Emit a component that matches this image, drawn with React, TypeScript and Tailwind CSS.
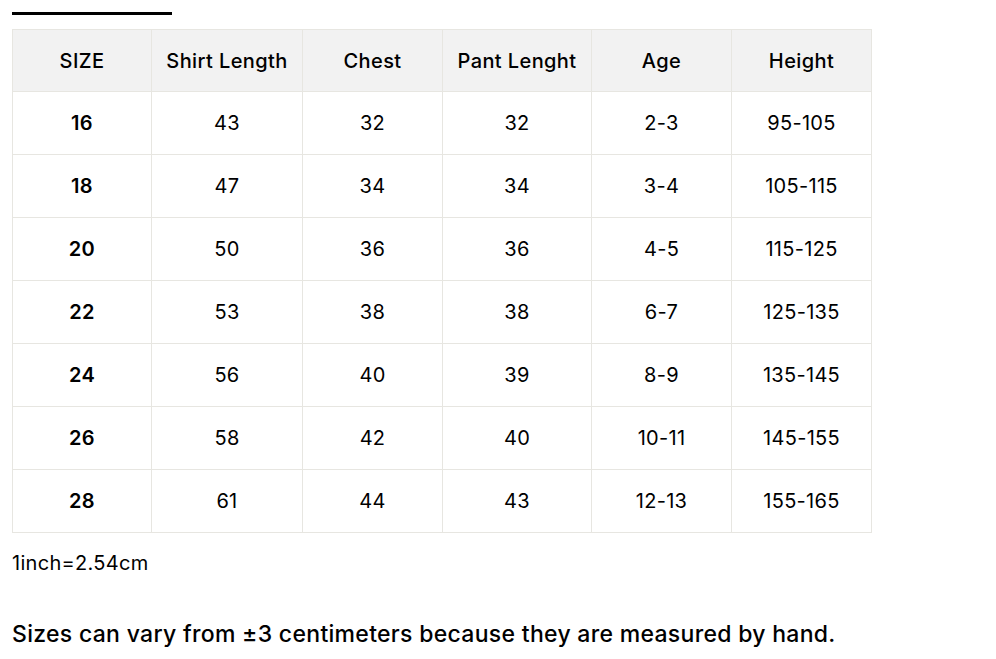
export default function App() {
  const headers = ["SIZE", "Shirt Length", "Chest", "Pant Lenght", "Age", "Height"];
  const widths = ["w-[139px]", "w-[151px]", "w-[140px]", "w-[149px]", "w-[140px]", "w-[140px]"];
  const rows = [
    ["16", "43", "32", "32", "2-3", "95-105"],
    ["18", "47", "34", "34", "3-4", "105-115"],
    ["20", "50", "36", "36", "4-5", "115-125"],
    ["22", "53", "38", "38", "6-7", "125-135"],
    ["24", "56", "40", "39", "8-9", "135-145"],
    ["26", "58", "42", "40", "10-11", "145-155"],
    ["28", "61", "44", "43", "12-13", "155-165"],
  ];
  return (
    <div className="bg-white min-h-[659px] pl-[12px] pt-[12px] text-black [font-family:Inter,'Noto_Sans',sans-serif]">
      <div className="w-[160px] h-[3px] bg-black" />
      <table className="mt-[14px] border-collapse table-fixed w-[860px]">
        <thead>
          <tr className="bg-[#f2f2f2] h-[62px]">
            {headers.map((h, i) => (
              <th key={h} className={`${widths[i]} border border-[#e7e6e1] text-[20px] tracking-[0.4px] font-medium text-center p-0`}>
                {h}
              </th>
            ))}
          </tr>
        </thead>
        <tbody>
          {rows.map((r) => (
            <tr key={r[0]} className="h-[63px]">
              {r.map((c, i) => (
                <td key={i} className={`border border-[#e7e6e1] text-[20px] tracking-[0.3px] text-center p-0 ${i === 0 ? "font-semibold" : "font-normal"}`}>
                  {c}
                </td>
              ))}
            </tr>
          ))}
        </tbody>
      </table>
      <p className="mt-[18px] text-[20px] tracking-[0.3px] leading-[24px]">1inch=2.54cm</p>
      <p className="mt-[45px] text-[23px] tracking-[0.3px] font-medium leading-[28px]">
        Sizes can vary from ±3 centimeters because they are measured by hand.
      </p>
    </div>
  );
}
